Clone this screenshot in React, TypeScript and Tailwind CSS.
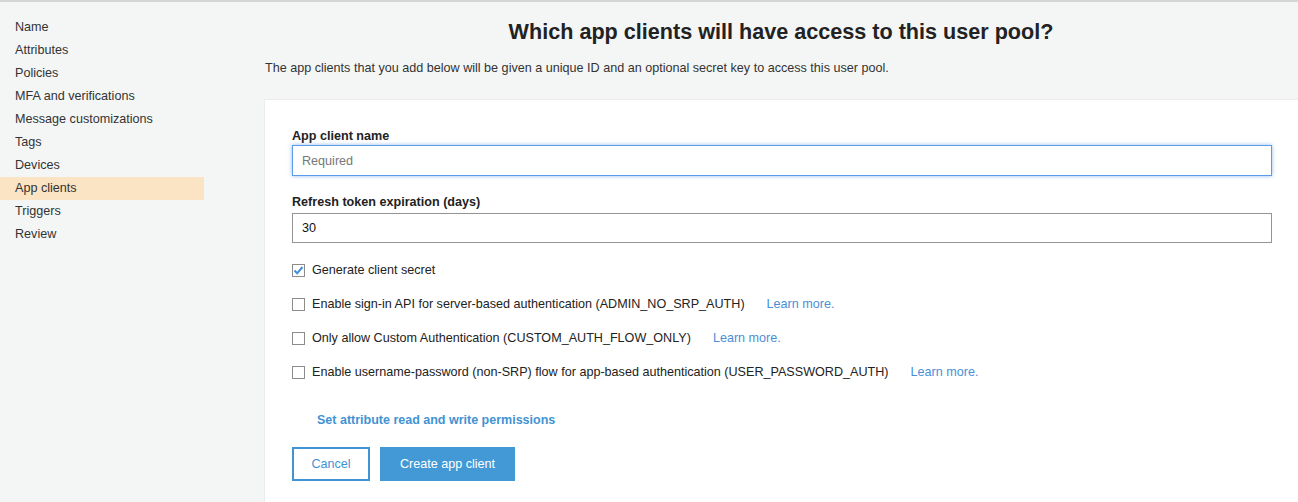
import React from 'react';

const navItems = [
  'Name',
  'Attributes',
  'Policies',
  'MFA and verifications',
  'Message customizations',
  'Tags',
  'Devices',
  'App clients',
  'Triggers',
  'Review',
];

const options = [
  { label: 'Generate client secret', checked: true },
  { label: 'Enable sign-in API for server-based authentication (ADMIN_NO_SRP_AUTH)', learn: true },
  { label: 'Only allow Custom Authentication (CUSTOM_AUTH_FLOW_ONLY)', learn: true },
  { label: 'Enable username-password (non-SRP) flow for app-based authentication (USER_PASSWORD_AUTH)', learn: true },
];

function Checkbox({ checked }: { checked?: boolean }) {
  return (
    <span className="w-[13px] h-[13px] border border-[#8c8c8c] bg-white flex items-center justify-center shrink-0">
      {checked && (
        <svg width="11" height="11" viewBox="0 0 11 11">
          <path d="M1.5 5.5 L4.2 8.3 L9.5 2" fill="none" stroke="#3f8fdb" strokeWidth="2" />
        </svg>
      )}
    </span>
  );
}

export default function App() {
  return (
    <div
      className="w-[1298px] h-[502px] bg-[#f4f6f6] border-t-2 border-[#d5d5d5] overflow-hidden flex text-[#222]"
      style={{ fontFamily: '"Liberation Sans", Arial, sans-serif' }}
    >
      <nav className="w-[204px] shrink-0 pt-[14px]">
        <ul>
          {navItems.map((item) => (
            <li
              key={item}
              className={`h-[23px] pl-[15px] flex items-center text-[12.6px] text-[#333] ${
                item === 'App clients' ? 'bg-[#fae4c4] text-[#111]' : ''
              }`}
            >
              {item}
            </li>
          ))}
        </ul>
      </nav>

      <main className="ml-[60px] flex-1 flex flex-col">
        <h1 className="text-center text-[21.6px] font-bold text-[#222] mt-[18px] leading-[24px]">
          Which app clients will have access to this user pool?
        </h1>
        <p className="ml-[1px] text-[12.6px] text-[#333] mt-[16px] leading-[16px]">
          The app clients that you add below will be given a unique ID and an optional secret key to access this user pool.
        </p>

        <section className="mt-[23px] flex-1 bg-white border-l border-t border-[#ececec] pl-[27px] pr-[26px] pt-[27px]">
          <label className="block text-[12.6px] font-bold text-[#222] leading-[18px]">App client name</label>
          <input
            placeholder="Required"
            className="w-full h-[31px] border border-[#5b9dea] shadow-[0_0_4px_rgba(74,144,226,0.6)] px-[9px] text-[12.6px] placeholder-[#777] outline-none"
          />

          <label className="block mt-[17px] text-[12.6px] font-bold text-[#222] leading-[18px]">
            Refresh token expiration (days)
          </label>
          <input
            defaultValue="30"
            className="mt-[2px] w-full h-[30px] border border-[#949494] px-[9px] text-[12.6px] text-[#111] outline-none"
          />

          <div className="mt-[10px] flex flex-col">
            {options.map((o) => (
              <div key={o.label} className="h-[34px] flex items-center">
                <Checkbox checked={o.checked} />
                <span className="ml-[7px] text-[12.6px] text-[#222]">{o.label}</span>
                {o.learn && (
                  <a className="ml-[22px] text-[12.6px] text-[#4a8fd6]" href="#">
                    Learn more.
                  </a>
                )}
              </div>
            ))}
          </div>

          <a href="#" className="block mt-[23px] ml-[25px] text-[12.5px] font-bold text-[#4293d3] leading-[16px]">
            Set attribute read and write permissions
          </a>

          <div className="mt-[19px] flex gap-[10px]">
            <button className="w-[78px] h-[34px] border-2 border-[#4293d3] bg-white text-[12.6px] text-[#4293d3]">
              Cancel
            </button>
            <button className="w-[135px] h-[34px] bg-[#4299d6] text-[12.6px] text-white">Create app client</button>
          </div>
        </section>
      </main>
    </div>
  );
}
